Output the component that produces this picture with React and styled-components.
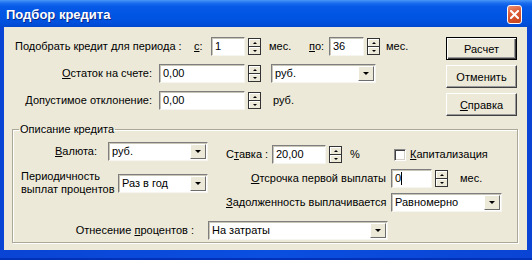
import React from "react";
import styled, { createGlobalStyle } from "styled-components";

const GlobalStyle = createGlobalStyle`
  html, body {
    margin: 0;
    padding: 0;
    background: #ffffff;
  }
  body {
    font-family: "Liberation Sans", Arial, sans-serif;
    font-size: 11px;
    color: #000;
  }
`;

const Window = styled.div`
  width: 532px;
  height: 260px;
  display: flex;
  flex-direction: column;
  overflow: hidden;
`;

const TitleBar = styled.div`
  height: 27px;
  flex: none;
  display: flex;
  align-items: center;
  justify-content: space-between;
  padding: 0 10px 0 6px;
  box-sizing: border-box;
  background: linear-gradient(
    180deg,
    #4a97f7 0%,
    #1a6cee 12%,
    #0659e6 25%,
    #0055e3 60%,
    #0050dc 85%,
    #0048cf 100%
  );
`;

const Title = styled.span`
  font-family: "Liberation Sans", Arial, sans-serif;
  font-weight: bold;
  font-size: 13px;
  color: #fff;
  text-shadow: 1px 1px 0 #0a2a8a;
  margin-top: 1px;
`;

const CloseButton = styled.div`
  width: 15px;
  height: 19px;
  margin-top: 1px;
  box-sizing: border-box;
  border: 1px solid #fff;
  border-radius: 3px;
  background: linear-gradient(160deg, #ec8d6f 0%, #dc5a33 45%, #c6431c 100%);
  display: flex;
  align-items: center;
  justify-content: center;
`;

const Frame = styled.div`
  flex: 1;
  display: flex;
  padding: 0 5px 10px 4px;
  background: linear-gradient(90deg, #0a44d4 0%, #0a4fe0 50%, #0a44d4 100%);
  box-shadow: inset 0 -2px 0 #0031b8;
`;

const Body = styled.div`
  flex: 1;
  background: #ece9d8;
  display: flex;
  flex-direction: column;
  padding-top: 10px;
  box-sizing: border-box;
`;

const TopSection = styled.div`
  display: flex;
  justify-content: space-between;
  padding: 0 10px 0 11px;
`;

const FieldRows = styled.div`
  display: flex;
  flex-direction: column;
  gap: 8px;
`;

const Row = styled.div`
  display: flex;
  align-items: center;
  height: ${(p) => (p.$h ? `${p.$h}px` : "19px")};
  margin-top: ${(p) => p.$mt || 0}px;
`;

const Label = styled.span`
  flex: none;
  width: ${(p) => (p.$w ? `${p.$w}px` : "auto")};
  text-align: ${(p) => (p.$right ? "right" : "left")};
  margin-left: ${(p) => p.$ml || 0}px;
  padding-right: ${(p) => p.$pr || 0}px;
  box-sizing: border-box;
  white-space: nowrap;
  line-height: 13px;

  u {
    text-decoration: underline;
    text-underline-offset: 1px;
  }
`;

const TwoLineLabel = styled(Label)`
  white-space: normal;
  line-height: 13px;
`;

const Sunken = styled.div`
  flex: none;
  width: ${(p) => p.$w}px;
  height: 19px;
  margin-left: ${(p) => p.$ml || 0}px;
  box-sizing: border-box;
  background: #fff;
  border: 1px solid;
  border-color: #7e7e7e #f6f5ef #f6f5ef #7e7e7e;
  box-shadow: inset 1px 1px 0 #c9c6b8;
  display: flex;
  align-items: center;
`;

const FieldText = styled.span`
  padding-left: 3px;
  flex: 1;
  white-space: nowrap;
  overflow: hidden;
  line-height: 13px;
`;

const Caret = styled.span`
  display: inline-block;
  width: 1px;
  height: 13px;
  background: #000;
  vertical-align: top;
`;

const SpinBox = styled.div`
  flex: none;
  width: 13px;
  height: 17px;
  margin-left: ${(p) => (p.$ml === undefined ? 3 : p.$ml)}px;
  box-sizing: border-box;
  border: 1px solid #333;
  background: #ece9d8;
  display: flex;
  flex-direction: column;
`;

const SpinHalf = styled.div`
  flex: 1;
  display: flex;
  align-items: center;
  justify-content: center;
  box-shadow: inset 1px 1px 0 #fff;
  & + & {
    border-top: 1px solid #333;
  }
`;

const Arrow = styled.span`
  width: 0;
  height: 0;
  border-left: ${(p) => p.$size || 2}px solid transparent;
  border-right: ${(p) => p.$size || 2}px solid transparent;
  ${(p) =>
    p.$up
      ? `border-bottom: ${p.$size || 2}px solid #000;`
      : `border-top: ${p.$size || 2}px solid #000;`}
`;

const DropButton = styled.div`
  flex: none;
  width: 16px;
  height: 15px;
  margin-right: 1px;
  box-sizing: border-box;
  background: #ece9d8;
  border: 1px solid;
  border-color: #fff #6d6d6d #6d6d6d #fff;
  display: flex;
  align-items: center;
  justify-content: center;
`;

const PushButtons = styled.div`
  display: flex;
  flex-direction: column;
  gap: 5px;
`;

const PushButton = styled.div`
  width: 71px;
  height: 23px;
  box-sizing: border-box;
  background: #ece9d8;
  border: 1px solid;
  border-color: ${(p) =>
    p.$default ? "#000" : "#fff #404040 #404040 #fff"};
  box-shadow: ${(p) =>
    p.$default
      ? "inset 1px 1px 0 #fff, inset -1px -1px 0 #404040, inset -2px -2px 0 #9a9a9a"
      : "inset -1px -1px 0 #9a9a9a"};
  display: flex;
  align-items: center;
  justify-content: center;
  u {
    text-decoration: underline;
    text-underline-offset: 1px;
  }
`;

const GroupBox = styled.fieldset`
  margin: 7px 9px 0 8px;
  padding: 6px 8px 2px 8px;
  min-width: 0;
  border: 1px solid #aca899;
  box-shadow: inset 1px 1px 0 #fff, 1px 1px 0 #fff;
  display: flex;
  flex-direction: column;
`;

const Legend = styled.legend`
  padding: 0 1px;
  margin-left: -2px;
  line-height: 13px;
`;

const Columns = styled.div`
  display: flex;
  align-items: flex-start;
`;

const Column = styled.div`
  display: flex;
  flex-direction: column;
  width: ${(p) => (p.$w ? `${p.$w}px` : "auto")};
  margin-left: ${(p) => p.$ml || 0}px;
  padding-top: ${(p) => p.$pt || 0}px;
  gap: ${(p) => p.$gap || 0}px;
`;

const CheckBox = styled.div`
  flex: none;
  width: 12px;
  height: 12px;
  box-sizing: border-box;
  background: #fff;
  border: 1px solid;
  border-color: #8a8a8a #fff #fff #8a8a8a;
  box-shadow: inset 1px 1px 0 #404040, inset -1px -1px 0 #d4d0c8;
`;

const Spinner = ({ ml }) => (
  <SpinBox $ml={ml}>
    <SpinHalf>
      <Arrow $up />
    </SpinHalf>
    <SpinHalf>
      <Arrow />
    </SpinHalf>
  </SpinBox>
);

const SpinField = ({ w, ml, value, caret }) => (
  <>
    <Sunken $w={w} $ml={ml}>
      <FieldText>
        {value}
        {caret && <Caret />}
      </FieldText>
    </Sunken>
    <Spinner />
  </>
);

const Combo = ({ w, ml, value }) => (
  <Sunken $w={w} $ml={ml}>
    <FieldText>{value}</FieldText>
    <DropButton>
      <Arrow $size={3} />
    </DropButton>
  </Sunken>
);

export default function App() {
  return (
    <>
      <GlobalStyle />
      <Window>
        <TitleBar>
          <Title>Подбор кредита</Title>
          <CloseButton>
            <svg width="9" height="9" viewBox="0 0 9 9">
              <path
                d="M1 1 L8 8 M8 1 L1 8"
                stroke="#fff"
                strokeWidth="2"
                strokeLinecap="square"
              />
            </svg>
          </CloseButton>
        </TitleBar>
        <Frame>
          <Body>
            <TopSection>
              <FieldRows>
                <Row>
                  <Label $w={179}>Подобрать кредит для периода :</Label>
                  <Label $w={17}>
                    <u>с</u>:
                  </Label>
                  <SpinField w={34} value="1" />
                  <Label $w={40} $ml={8}>
                    мес.
                  </Label>
                  <Label $w={20}>
                    <u>п</u>о:
                  </Label>
                  <SpinField w={35} value="36" />
                  <Label $ml={6}>мес.</Label>
                </Row>
                <Row>
                  <Label $w={137} $right>
                    <u>О</u>статок на счете:
                  </Label>
                  <SpinField w={86} ml={7} value="0,00" />
                  <Combo w={105} ml={10} value="руб." />
                </Row>
                <Row>
                  <Label $w={137} $right>
                    Допустимое отклонение:
                  </Label>
                  <SpinField w={86} ml={7} value="0,00" />
                  <Label $ml={12}>руб.</Label>
                </Row>
              </FieldRows>
              <PushButtons>
                <PushButton $default>Расчет</PushButton>
                <PushButton>Отменить</PushButton>
                <PushButton>
                  <u>С</u>правка
                </PushButton>
              </PushButtons>
            </TopSection>

            <GroupBox>
              <Legend>Описание кредита</Legend>
              <Columns>
                <Column $w={187}>
                  <Row>
                    <Label $w={76} $right>
                      <u>В</u>алюта:
                    </Label>
                    <Combo w={100} ml={11} value="руб." />
                  </Row>
                  <Row $h={26} $mt={9}>
                    <TwoLineLabel $w={97}>
                      Периодичность
                      <br />
                      выплат процентов
                    </TwoLineLabel>
                    <Combo w={90} value="Раз в год" />
                  </Row>
                </Column>
                <Column $ml={18} $pt={3} $gap={5}>
                  <Row>
                    <Label $w={46}>
                      С<u>т</u>авка :
                    </Label>
                    <SpinField w={54} value="20,00" />
                    <Label $w={44} $ml={8}>
                      %
                    </Label>
                    <CheckBox />
                    <Label $ml={4}>
                      <u>К</u>апитализация
                    </Label>
                  </Row>
                  <Row>
                    <Label $w={160} $right>
                      <u>О</u>тсрочка первой выплаты
                    </Label>
                    <SpinField w={41} ml={5} value="0" caret />
                    <Label $ml={12}>мес.</Label>
                  </Row>
                  <Row>
                    <Label $w={160} $right>
                      <u>З</u>адолженность выплачивается
                    </Label>
                    <Combo w={111} ml={5} value="Равномерно" />
                  </Row>
                </Column>
              </Columns>
              <Row $mt={9}>
                <Label $w={187} $right $pr={14}>
                  Отнесение <u>п</u>роцентов :
                </Label>
                <Combo w={180} value="На затраты" />
              </Row>
            </GroupBox>
          </Body>
        </Frame>
      </Window>
    </>
  );
}
